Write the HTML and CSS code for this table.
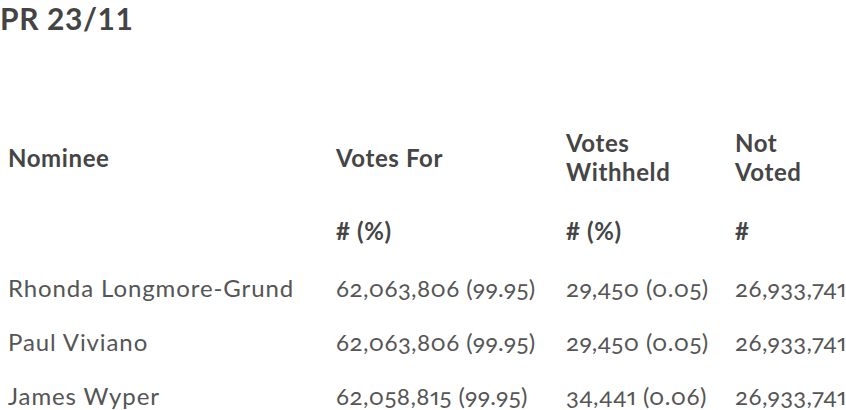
FILE: index.html
```html
<!DOCTYPE html>
<html>
<head>
<meta charset="utf-8">
<link rel="stylesheet" href="styles.css">
</head>
<body>
<h2 class="title">PR 23/11</h2>
<table class="votes">
  <colgroup>
    <col class="c1"><col class="c2"><col class="c3"><col class="c4">
  </colgroup>
  <thead>
    <tr class="head1">
      <th>Nominee</th>
      <th>Votes For</th>
      <th>Votes<br>Withheld</th>
      <th>Not<br>Voted</th>
    </tr>
    <tr class="head2">
      <th></th>
      <th># (%)</th>
      <th># (%)</th>
      <th>#</th>
    </tr>
  </thead>
  <tbody>
    <tr><td class="name">Rhonda Longmore-Grund</td><td>62,063,806 (99.95)</td><td>29,450 (0.05)</td><td>26,933,741</td></tr>
    <tr><td class="name">Paul Viviano</td><td>62,063,806 (99.95)</td><td>29,450 (0.05)</td><td>26,933,741</td></tr>
    <tr><td class="name">James Wyper</td><td>62,058,815 (99.95)</td><td>34,441 (0.06)</td><td>26,933,741</td></tr>
  </tbody>
</table>
</body>
</html>
```

FILE: styles.css
```css
html, body {
  margin: 0;
  padding: 0;
  background: #ffffff;
  overflow: hidden;
}
body {
  font-family: Lato, "Noto Sans", sans-serif;
  color: #555555;
  width: 846px;
}
.title {
  margin: 0;
  font-size: 30px;
  line-height: 36px;
  font-weight: 700;
  letter-spacing: 0.6px;
  color: #444444;
}
.votes {
  margin-top: 80px;
  border-collapse: collapse;
  table-layout: fixed;
  width: 846px;
}
.c1 { width: 328px; }
.c2 { width: 230px; }
.c3 { width: 169px; }
.c4 { width: 119px; }
.votes th, .votes td {
  padding: 0 0 0 8px;
  text-align: left;
  vertical-align: middle;
  white-space: nowrap;
}
.votes th {
  font-size: 24px;
  line-height: 29px;
  font-weight: 700;
  letter-spacing: 0.6px;
  color: #454545;
}
.votes td {
  font-size: 24px;
  line-height: 29px;
  font-weight: 400;
  color: #555555;
  font-variant-numeric: oldstyle-nums proportional-nums;
  letter-spacing: 0.4px;
}
.votes td.name {
  letter-spacing: 0.9px;
}
.head1 { height: 82px; }
.head2 { height: 62px; }
.head2 th { padding-top: 2px; }
.votes tbody tr { height: 54px; }
```
